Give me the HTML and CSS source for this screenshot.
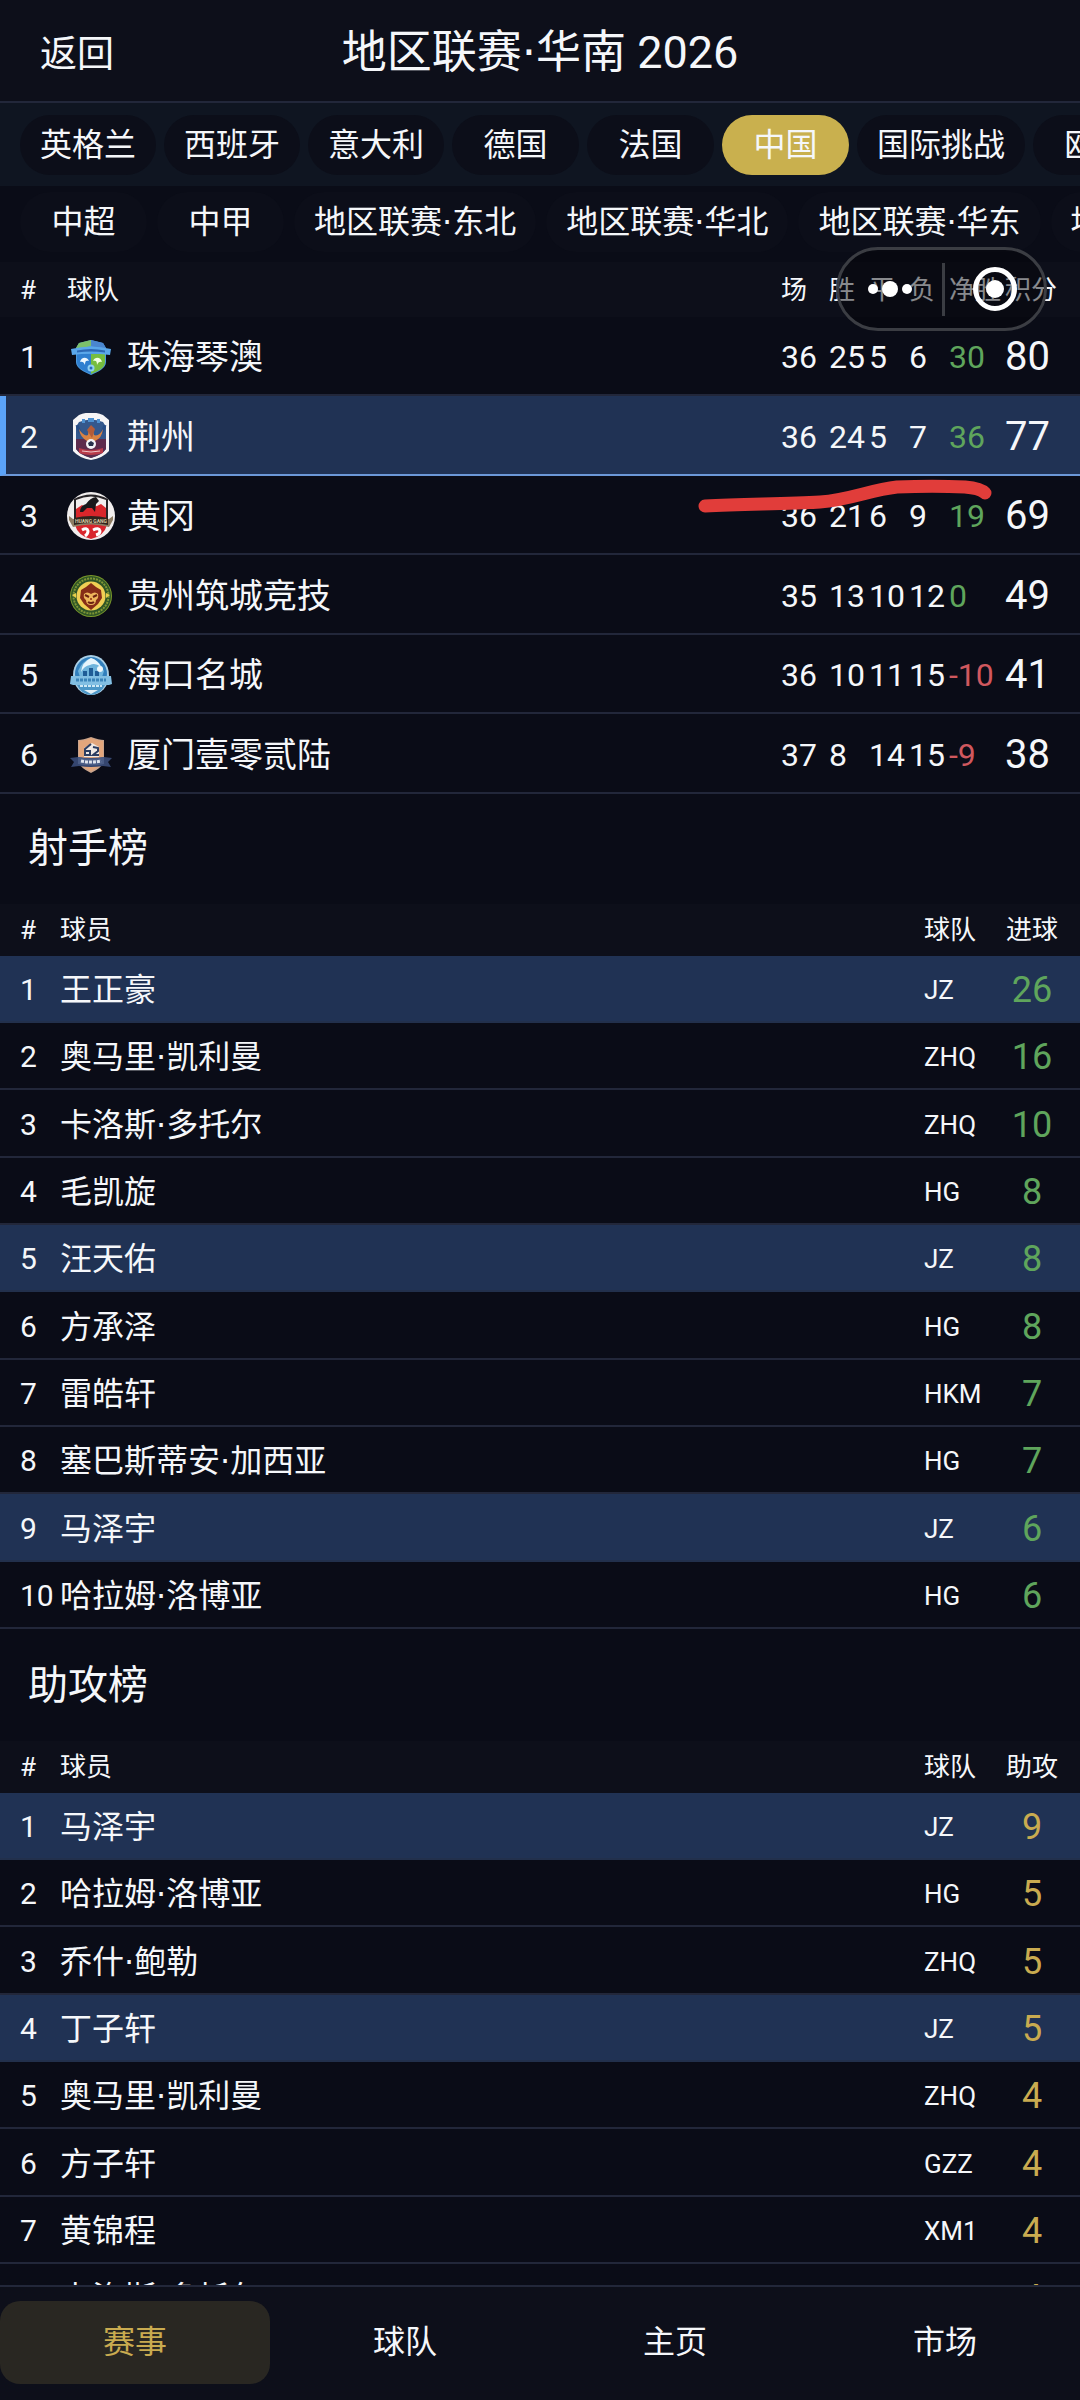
FILE: index.html
```html
<!DOCTYPE html>
<html lang="zh-CN">
<head>
    <meta charset="UTF-8">
    <meta name="viewport" content="width=device-width, initial-scale=1.0">
    <title>地区联赛·华南 2026</title>
    <link rel="stylesheet" href="styles.css">
</head>
<body>
    <div class="app">
        <header class="topbar">
            <button type="button" class="back">返回</button>
            <h1>地区联赛<span class="dot">·</span>华南 2026</h1>
        </header>

        <nav class="tabs tabs-country">
            <button type="button" class="tab">英格兰</button>
            <button type="button" class="tab">西班牙</button>
            <button type="button" class="tab">意大利</button>
            <button type="button" class="tab">德国</button>
            <button type="button" class="tab">法国</button>
            <button type="button" class="tab active">中国</button>
            <button type="button" class="tab">国际挑战</button>
            <button type="button" class="tab">欧洲</button>
        </nav>

        <nav class="tabs tabs-league">
            <button type="button" class="tab">中超</button>
            <button type="button" class="tab">中甲</button>
            <button type="button" class="tab">地区联赛<span class="dot">·</span>东北</button>
            <button type="button" class="tab">地区联赛<span class="dot">·</span>华北</button>
            <button type="button" class="tab">地区联赛<span class="dot">·</span>华东</button>
            <button type="button" class="tab">地区联赛<span class="dot">·</span>华南</button>
        </nav>

        <main class="content">
            <table class="standings">
                <thead>
                    <tr>
                        <th class="rank">#</th>
                        <th class="team">球队</th>
                        <th class="played">场</th>
                        <th class="won">胜</th>
                        <th class="drawn">平</th>
                        <th class="lost">负</th>
                        <th class="diff">净胜</th>
                        <th class="points">积分</th>
                    </tr>
                </thead>
                <tbody>
                    <tr>
                        <td>1</td>
                        <td>
                            <div class="club">
                                <svg class="crest" viewBox="0 0 48 48" aria-hidden="true">
                                    <path d="M12 10 24 7l12 3 3 5v14c0 6-8 10-15 13C17 39 9 35 9 29V15z" fill="#4d9be0"/>
                                    <path d="M12 10 24 7v6L9 17v-2z" fill="#7cc06a"/>
                                    <path d="M24 7l12 3 3 5v2l-15-4z" fill="#4a86cf"/>
                                    <path d="M24 21h14v8c0 6-7 9-14 12z" fill="#76bd3f"/>
                                    <path d="M10 21h14v20C17 38 10 35 10 29z" fill="#2f7fd0"/>
                                    <path d="M4 16q20-5 40 0l-1 6q-19-3-38 0z" fill="#5aa7ea"/>
                                    <path d="M10 17.500q14-3 28 0v2q-14-2-28 0z" fill="#2c68b4"/>
                                    <path d="M13 29c1-5 7-6 9-1-3-1-4 0-4 4-1-3-3-4-5-3z" fill="#eef8ff"/>
                                    <path d="M35 29c-1-5-7-6-9-1 3-1 4 0 4 4 1-3 3-4 5-3z" fill="#f2ffe2"/>
                                    <circle cx="24" cy="35" r="3.500" fill="#8fd0f4"/>
                                    <circle cx="24" cy="35" r="1.500" fill="#2a6cb8"/>
                                </svg>
                                <span>珠海琴澳</span>
                            </div>
                        </td>
                        <td>36</td><td>25</td><td>5</td><td>6</td>
                        <td class="plus">30</td>
                        <td class="total">80</td>
                    </tr>
                    <tr class="mine">
                        <td>2</td>
                        <td>
                            <div class="club">
                                <svg class="crest" viewBox="0 0 48 48" aria-hidden="true">
                                    <path d="M12 2q12-5 24 0l6 5v31q-6 7-18 9Q12 45 6 38V7z" fill="#f6f5f6"/>
                                    <path d="M12 9q12-5 24 0l3 5v22q-4 6-15 9-11-3-15-9V14z" fill="#34588c"/>
                                    <path d="M9 26h30v10q-4 6-15 9-11-3-15-9z" fill="#5d2b4c"/>
                                    <path d="M10 12l3 8m25-8-3 8" stroke="#274d86" stroke-width="3"/>
                                    <path d="M15 8h3m3-1h6m3 1h3" stroke="#4d90d0" stroke-width="4"/>
                                    <path d="M12 16q5 8 9 6l1-7 2 2 2 1 1 4q5 2 9-6-1 9-8 12h-8q-7-4-8-12z" fill="#d98242"/>
                                    <path d="M20 17l4-5 4 4-3 9z" fill="#b45c38"/>
                                    <circle cx="24" cy="31" r="5" fill="#f3f3f6"/>
                                    <path d="M24 28l3 2-1 3h-4l-1-3z" fill="#26304a"/>
                                    <path d="M12 35q12 4 24 0v5q-12 4-24 0z" fill="#b83b4a"/>
                                    <path d="M15 38q9 2 18 0" stroke="#edc4c6" fill="none"/>
                                </svg>
                                <span>荆州</span>
                            </div>
                        </td>
                        <td>36</td><td>24</td><td>5</td><td>7</td>
                        <td class="plus">36</td>
                        <td class="total">77</td>
                    </tr>
                    <tr>
                        <td>3</td>
                        <td>
                            <div class="club">
                                <svg class="crest" viewBox="0 0 48 48" aria-hidden="true">
                                    <circle cx="24" cy="24" r="24" fill="#f1eeee"/>
                                    <path d="M7 7q17-9 34 0v18q0 13-17 21Q7 38 7 25z" fill="#262326"/>
                                    <path d="M9 8q15-7 30 0v17H9z" fill="#f1eeee"/>
                                    <path d="M9 17l6-4 5 3 10-2 4-2 5 4v12H9z" fill="#d9262b"/>
                                    <path d="M13 20q0-6 6-8 4-6 10-7l3 4-3 3-1 8-3-4h-5l-4 4z" fill="#18171a"/>
                                    <path d="M8 33q16-5 32 0-3 11-16 14Q11 44 8 33z" fill="#d8252c"/>
                                    <path d="M2 24l4 3q18-4 36 0l4-3v4l-4 7q-18-5-36 0l-4-7z" fill="#8e7d63"/>
                                    <path d="M7 26q17-4 34 0v7q-17-4-34 0z" fill="#30241d"/>
                                    <text x="24" y="31" text-anchor="middle" class="crest-text">HUANG GANG</text>
                                    <path d="M15 38q5-3 6 1 0 3-3 5m8-6q6-3 7 1 0 3-4 4" stroke="#fff" stroke-width="3" fill="none"/>
                                </svg>
                                <span>黄冈</span>
                            </div>
                        </td>
                        <td>36</td><td>21</td><td>6</td><td>9</td>
                        <td class="plus">19</td>
                        <td class="total">69</td>
                    </tr>
                    <tr>
                        <td>4</td>
                        <td>
                            <div class="club">
                                <svg class="crest" viewBox="0 0 48 48" aria-hidden="true">
                                    <circle cx="24" cy="24" r="21" fill="#7c9a2a"/>
                                    <circle cx="24" cy="24" r="20" fill="#2f5526"/>
                                    <circle cx="24" cy="24" r="17.500" fill="none" stroke="#7f9535" stroke-width="2" stroke-dasharray="2 1"/>
                                    <circle cx="24" cy="24" r="14.500" fill="#f0cf54"/>
                                    <path d="M24 11l5 4 5 3 1 8-4 6-7 6-7-6-4-6 1-8 5-3z" fill="#862d17"/>
                                    <path d="M17 22q3-3 7 0 4-3 7 0 1 4-2 6 0 5-5 5t-5-5q-3-2-2-6z" fill="#eeb65b"/>
                                    <path d="M18 23l4 2m8-2-4 2M21 30q3 2 6 0" stroke="#6a2111" stroke-width="2" fill="none"/>
                                    <path d="M23 26h2v2h-2z" fill="#a3511f"/>
                                    <path d="M5 23l4-2v5zm38 0-4-2v5z" fill="#e7cf4a"/>
                                </svg>
                                <span>贵州筑城竞技</span>
                            </div>
                        </td>
                        <td>35</td><td>13</td><td>10</td><td>12</td>
                        <td class="plus">0</td>
                        <td class="total">49</td>
                    </tr>
                    <tr>
                        <td>5</td>
                        <td>
                            <div class="club">
                                <svg class="crest" viewBox="0 0 48 48" aria-hidden="true">
                                    <ellipse cx="24" cy="24" rx="18" ry="20" fill="#a9cfe6"/>
                                    <ellipse cx="24" cy="23" rx="16" ry="17" fill="#3280bd"/>
                                    <path d="M11 20q4-10 13-13 9 3 13 13l-2 6H13z" fill="#6fb4dc"/>
                                    <path d="M24 7q7 2 10 9-6-5-11-2-6 1-9 7 1-10 10-14z" fill="#e7f5fc"/>
                                    <path d="M16 20h4v5h-4zm6-3h4v8h-4zm6 3h4v5h-4z" fill="#1f5c96"/>
                                    <circle cx="33" cy="18" r="3" fill="#eef7fb"/>
                                    <path d="M4 25h40l1 8-3 1H6l-3-1z" fill="#82bfe3"/>
                                    <path d="M9 29h30" stroke="#3a84b9" stroke-width="3" stroke-dasharray="3 1"/>
                                    <path d="M10 34h28q-4 9-14 10-10-1-14-10z" fill="#4d98c8"/>
                                    <path d="M17 39h14l-7 4z" fill="#e1f0f7"/>
                                    <path d="M13 35h22" stroke="#cde8f5" stroke-width="2" stroke-dasharray="3 1"/>
                                </svg>
                                <span>海口名城</span>
                            </div>
                        </td>
                        <td>36</td><td>10</td><td>11</td><td>15</td>
                        <td class="minus">-10</td>
                        <td class="total">41</td>
                    </tr>
                    <tr>
                        <td>6</td>
                        <td>
                            <div class="club">
                                <svg class="crest" viewBox="0 0 48 48" aria-hidden="true">
                                    <path d="M11 9q5 0 13-3 8 3 13 3v19q0 8-13 14Q11 36 11 28z" fill="#c9a48c"/>
                                    <path d="M12 10q6 0 12-3 6 3 12 3v17q0 8-12 13-12-5-12-13z" fill="#e2a67c"/>
                                    <path d="M17 17l8-5 7 4v10H17z" fill="#f0e9e4"/>
                                    <path d="M24 13l-6 5v6h5v-4h-4m7-4 5 1v3l-5 4h6" fill="none" stroke="#2c3d61" stroke-width="2"/>
                                    <path d="M3 27l8-1q13 2 26 0l8 1-4 4 3 5-8-1q-12 2-24 0l-8 1 3-5z" fill="#35466f"/>
                                    <path d="M11 26q13 3 26 0v7q-13 3-26 0z" fill="#4b5d86"/>
                                    <path d="M14 30q10 2 20 0" stroke="#dfe4ee" stroke-width="3" fill="none" stroke-dasharray="3 1"/>
                                </svg>
                                <span>厦门壹零贰陆</span>
                            </div>
                        </td>
                        <td>37</td><td>8</td><td>14</td><td>15</td>
                        <td class="minus">-9</td>
                        <td class="total">38</td>
                    </tr>
                </tbody>
            </table>

            <h2>射手榜</h2>
            <table class="ranking goals">
                <thead>
                    <tr><th class="rank">#</th><th>球员</th><th class="code">球队</th><th class="count">进球</th></tr>
                </thead>
                <tbody>
                    <tr class="mine"><td>1</td><td class="name">王正豪</td><td class="code">JZ</td><td class="count">26</td></tr>
                    <tr><td>2</td><td class="name">奥马里<span class="dot">·</span>凯利曼</td><td class="code">ZHQ</td><td class="count">16</td></tr>
                    <tr><td>3</td><td class="name">卡洛斯<span class="dot">·</span>多托尔</td><td class="code">ZHQ</td><td class="count">10</td></tr>
                    <tr><td>4</td><td class="name">毛凯旋</td><td class="code">HG</td><td class="count">8</td></tr>
                    <tr class="mine"><td>5</td><td class="name">汪天佑</td><td class="code">JZ</td><td class="count">8</td></tr>
                    <tr><td>6</td><td class="name">方承泽</td><td class="code">HG</td><td class="count">8</td></tr>
                    <tr><td>7</td><td class="name">雷皓轩</td><td class="code">HKM</td><td class="count">7</td></tr>
                    <tr><td>8</td><td class="name">塞巴斯蒂安<span class="dot">·</span>加西亚</td><td class="code">HG</td><td class="count">7</td></tr>
                    <tr class="mine"><td>9</td><td class="name">马泽宇</td><td class="code">JZ</td><td class="count">6</td></tr>
                    <tr><td>10</td><td class="name">哈拉姆<span class="dot">·</span>洛博亚</td><td class="code">HG</td><td class="count">6</td></tr>
                </tbody>
            </table>

            <h2>助攻榜</h2>
            <table class="ranking assists">
                <thead>
                    <tr><th class="rank">#</th><th>球员</th><th class="code">球队</th><th class="count">助攻</th></tr>
                </thead>
                <tbody>
                    <tr class="mine"><td>1</td><td class="name">马泽宇</td><td class="code">JZ</td><td class="count">9</td></tr>
                    <tr><td>2</td><td class="name">哈拉姆<span class="dot">·</span>洛博亚</td><td class="code">HG</td><td class="count">5</td></tr>
                    <tr><td>3</td><td class="name">乔什<span class="dot">·</span>鲍勒</td><td class="code">ZHQ</td><td class="count">5</td></tr>
                    <tr class="mine"><td>4</td><td class="name">丁子轩</td><td class="code">JZ</td><td class="count">5</td></tr>
                    <tr><td>5</td><td class="name">奥马里<span class="dot">·</span>凯利曼</td><td class="code">ZHQ</td><td class="count">4</td></tr>
                    <tr><td>6</td><td class="name">方子轩</td><td class="code">GZZ</td><td class="count">4</td></tr>
                    <tr><td>7</td><td class="name">黄锦程</td><td class="code">XM1</td><td class="count">4</td></tr>
                    <tr><td>8</td><td class="name">卡洛斯<span class="dot">·</span>多托尔</td><td class="code">ZHQ</td><td class="count">4</td></tr>
                </tbody>
            </table>
        </main>

        <nav class="bottom-nav">
            <a href="#matches" class="active">赛事</a>
            <a href="#team">球队</a>
            <a href="#home">主页</a>
            <a href="#market">市场</a>
        </nav>

        <!-- floating menu capsule -->
        <div class="capsule">
            <button type="button" aria-label="更多">
                <svg viewBox="0 0 48 48"><circle cx="7" cy="24" r="5"/><circle cx="24" cy="24" r="8"/><circle cx="41" cy="24" r="5"/></svg>
            </button>
            <button type="button" aria-label="关闭">
                <svg viewBox="0 0 48 48"><circle cx="24" cy="24" r="19.500" class="ring"/><circle cx="24" cy="24" r="9"/></svg>
            </button>
        </div>

        <!-- hand-drawn marker line -->
        <svg class="marker" viewBox="0 0 300 40" aria-hidden="true">
            <path d="M10 28C50 26 90 26 125 24 155 22 175 12 202 9 225 8 250 8 270 9 281 10 287 12 290 15"/>
        </svg>
    </div>
</body>
</html>
```
FILE: styles.css
```css
* {
    box-sizing: border-box;
}

body {
    margin: 0;
    background-color: #0a0c17;
    color: #f5f7fa;
    font-family: Roboto, "Noto Sans CJK SC", sans-serif;
    font-size: 32px;
}

button {
    border: none;
    background: none;
    color: inherit;
    font: inherit;
    cursor: pointer;
}

.dot {
    font-family: "DejaVu Sans", sans-serif;
}

.app {
    position: relative;
    display: flex;
    flex-direction: column;
    height: 100vh;
    overflow: hidden;
}

.topbar {
    display: grid;
    grid-template-columns: 1fr auto 1fr;
    align-items: center;
    height: 103px;
    padding: 0 40px;
    background-color: #0d0f1a;
    border-bottom: 2px solid #22273a;
}

.back {
    justify-self: start;
    padding: 0;
    font-size: 37px;
}

h1 {
    margin: 0;
    padding-top: 4px;
    font-size: 45px;
    font-weight: 400;
    line-height: 60px;
}

/* scrolling pill rows */
.tabs {
    display: flex;
    gap: 8px;
    padding: 0 20px;
    overflow: hidden;
}

.tabs-country {
    height: 83px;
    padding-top: 12px;
    background-color: #0f1521;
}

.tabs-league {
    gap: 10px;
    height: 76px;
    padding-top: 6px;
}

.tab {
    flex: none;
    min-width: 127px;
    height: 60px;
    padding: 0 20px;
    border-radius: 30px;
    background-color: #0c0e19;
    line-height: 60px;
    white-space: nowrap;
}

.tab.active {
    background-color: #c9b04e;
}

.content {
    flex: 1;
    min-height: 0;
    overflow: hidden;
}

table {
    width: 100%;
    table-layout: fixed;
    border-spacing: 0;
}

th,
td {
    padding: 0;
    text-align: left;
    font-weight: 400;
    line-height: 40px;
    white-space: nowrap;
}

th {
    background-color: #0d0f1a;
    font-size: 26px;
}

td {
    padding-top: 3px;
    border-bottom: 2px solid #22273a;
}

th:first-child,
td:first-child {
    padding-left: 20px;
}

.mine td {
    background-color: #203254;
    border-bottom-color: #22304c;
}

/* league table */
.standings th {
    height: 55px;
}

.standings td {
    height: 79px;
    font-size: 32px;
}

.standings tr:nth-child(even) td {
    height: 80px;
}

.standings .rank { width: 67px; }
.standings .played { width: 48px; }
.standings .won,
.standings .drawn,
.standings .lost { width: 40px; }
.standings .diff { width: 56px; }
.standings .points { width: 75px; }

.standings .mine td {
    border-bottom-color: #6c98d8;
}

.standings .mine td:first-child {
    padding-left: 14px;
    border-left: 6px solid #5ba3f8;
}

.standings .total {
    font-size: 40px;
}

.plus {
    color: #5fa55c;
}

.standings .minus {
    color: #d0585e;
}

.club {
    display: flex;
    align-items: center;
    gap: 12px;
    font-size: 34px;
}

.crest {
    flex: none;
    width: 48px;
    height: 48px;
}

.crest-text {
    fill: #d9c9a4;
    font-size: 5px;
    font-weight: 700;
}

/* scorers and assists */
h2 {
    margin: 0;
    padding: 0 28px;
    font-size: 40px;
    font-weight: 400;
    line-height: 110px;
}

.ranking {
    margin-bottom: 2px;
}

.ranking th {
    height: 52px;
}

.ranking td {
    height: 67px;
    font-size: 30px;
}

.ranking tr:nth-child(3n) td {
    height: 68px;
}

.ranking .rank { width: 60px; }
.ranking .code { width: 80px; font-size: 26px; }
.ranking .count { width: 76px; padding-right: 20px; text-align: center; }

.ranking .name {
    font-size: 32px;
}

.ranking td.count {
    font-size: 36px;
}

.goals td.count {
    color: #5fa55c;
}

.assists td.count {
    color: #c9ab50;
}

.bottom-nav {
    display: flex;
    height: 115px;
    padding: 14px 0 16px;
    background-color: #0d0f1a;
    border-top: 2px solid #22273a;
}

.bottom-nav a {
    flex: 1;
    border-radius: 20px;
    color: inherit;
    line-height: 82px;
    text-align: center;
    text-decoration: none;
}

.bottom-nav .active {
    background-color: #292722;
    color: #c9ab50;
}

.capsule {
    position: absolute;
    top: 247px;
    right: 33px;
    display: flex;
    width: 211px;
    height: 84px;
    border: 3px solid #3b3d43;
    border-radius: 42px;
    background-color: rgba(4, 5, 8, 0.45);
}

.capsule button {
    display: flex;
    flex: 1;
    align-items: center;
    justify-content: center;
    padding: 0;
}

.capsule button + button::before {
    content: "";
    width: 3px;
    height: 53px;
    margin-right: auto;
    background-color: #3b3d43;
}

.capsule button + button svg {
    margin-right: 25px;
}

.capsule svg {
    width: 48px;
    height: 48px;
    fill: #fff;
}

.capsule .ring {
    fill: none;
    stroke: #fff;
    stroke-width: 5px;
}

.marker {
    position: absolute;
    top: 478px;
    right: 85px;
    width: 300px;
    height: 40px;
    pointer-events: none;
}

.marker path {
    fill: none;
    stroke: #e13d3a;
    stroke-width: 13px;
    stroke-linecap: round;
}
```
